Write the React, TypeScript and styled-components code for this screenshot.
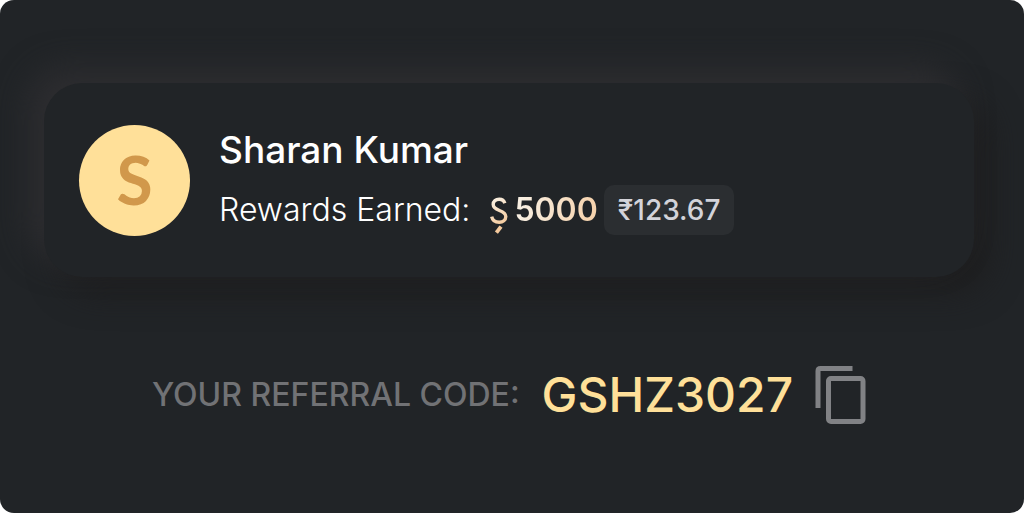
import React from 'react';
import styled, { createGlobalStyle } from 'styled-components';

const GlobalStyle = createGlobalStyle`
  *, *::before, *::after { box-sizing: border-box; }
  body { margin: 0; background: #ffffff; }
`;

const Panel = styled.main`
  min-height: 100vh;
  padding: 83px 50px 40px 44px;
  border-radius: 14px;
  background: #212427;
  color: #ffffff;
  font-family: Inter, 'Liberation Sans', sans-serif;
`;

const Card = styled.section`
  display: flex;
  align-items: center;
  gap: 29px;
  min-height: 194px;
  padding: 0 35px;
  border-radius: 38px;
  background: #212427;
  box-shadow: -16px -16px 32px #2d2d30, 16px 16px 32px #1e1e1f;
`;

const Avatar = styled.div`
  display: flex;
  flex: none;
  align-items: center;
  justify-content: center;
  width: 111px;
  height: 111px;
  border-radius: 50%;
  background: #ffe099;
  color: #d1984b;
  font-family: Lato, 'Liberation Sans', sans-serif;
  font-size: 66px;
  font-weight: 700;
  line-height: 1;
`;

const Details = styled.div`
  display: flex;
  flex-direction: column;
  gap: 10px;
`;

const Name = styled.h1`
  margin: 0;
  font-size: 37px;
  font-weight: 500;
  line-height: 50px;
`;

const Rewards = styled.div`
  display: flex;
  align-items: center;
  font-size: 32px;
  line-height: 50px;
  white-space: nowrap;
`;

const RewardsLabel = styled.span`
  margin-right: 20px;
  font-weight: 300;
`;

const Points = styled.span`
  display: flex;
  align-items: center;
  gap: 6px;
  margin-right: 6px;
`;

const PointsValue = styled.strong`
  background: linear-gradient(100deg, #f8efe2 10%, #f6d3ae 90%);
  background-clip: text;
  color: transparent;
  font-size: 32px;
  font-weight: 600;
`;

const CashValue = styled.span`
  padding: 0 14px;
  border-radius: 10px;
  background: #2b2e31;
  color: #d3d3d9;
  font-size: 28px;
  font-weight: 500;
`;

const Referral = styled.section`
  display: flex;
  align-items: center;
  justify-content: center;
  gap: 22px;
  margin-top: 84px;
  line-height: 68px;
  white-space: nowrap;
`;

const ReferralLabel = styled.span`
  color: #717275;
  font-size: 32px;
  font-weight: 500;
`;

const ReferralCode = styled.span`
  color: #ffe099;
  font-size: 48px;
  font-weight: 500;
`;

const CopyButton = styled.button`
  display: flex;
  padding: 0;
  border: 0;
  background: none;
  color: #818285;
  cursor: pointer;
`;

const CoinIcon = () => (
  <svg width="18" height="48" viewBox="0 0 18 48" fill="none" aria-hidden="true">
    <defs>
      <linearGradient id="coin" x1="0" y1="4" x2="18" y2="36" gradientUnits="userSpaceOnUse">
        <stop offset="0.2" stopColor="#fbf3e6" />
        <stop offset="1" stopColor="#f4c99c" />
      </linearGradient>
    </defs>
    <path
      d="M14.8 17.2C14 14.4 12 13.3 9.2 13.3C5.8 13.3 3.2 15.2 3.2 18.6C3.2 25.6 15.8 23.4 15.8 30.6C15.8 34.2 12.9 36.3 9.2 36.3C5.2 36.3 2.5 34.4 1.7 30.6"
      stroke="url(#coin)"
      strokeWidth="3.4"
    />
    <path d="M11 40.6L6.4 46.6" stroke="url(#coin)" strokeWidth="3.8" />
  </svg>
);

const CopyIcon = () => (
  <svg width="51" height="58" viewBox="0 0 51 58" fill="none" stroke="currentColor" strokeWidth="5" aria-hidden="true">
    <path d="M3 42V5Q3 2.5 5.5 2.5H37.5" />
    <rect x="13.5" y="12.5" width="34.5" height="43" rx="2.5" />
  </svg>
);

export default function App() {
  return (
    <>
      <GlobalStyle />
      <Panel>
        <Card>
          <Avatar>S</Avatar>
          <Details>
            <Name>Sharan Kumar</Name>
            <Rewards>
              <RewardsLabel>Rewards Earned:</RewardsLabel>
              <Points>
                <CoinIcon />
                <PointsValue>5000</PointsValue>
              </Points>
              <CashValue>₹123.67</CashValue>
            </Rewards>
          </Details>
        </Card>
        <Referral>
          <ReferralLabel>YOUR REFERRAL CODE:</ReferralLabel>
          <ReferralCode>GSHZ3027</ReferralCode>
          <CopyButton type="button" aria-label="Copy referral code">
            <CopyIcon />
          </CopyButton>
        </Referral>
      </Panel>
    </>
  );
}
